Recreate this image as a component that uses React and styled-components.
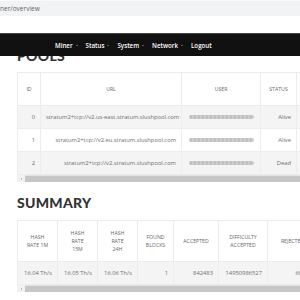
import React from "react";
import styled, { createGlobalStyle } from "styled-components";

const Global = createGlobalStyle`
  html, body { margin: 0; padding: 0; background: #fff; }
  body { width: 300px; height: 300px; overflow: hidden; font-family: "Open Sans", "Liberation Sans", sans-serif; }
  #root { position: relative; width: 300px; }
`;

const UrlBar = styled.div`
  height: 16px;
  background: #f1f3f4;
  border-top: 1px solid #fafafa;
  box-sizing: border-box;
  display: flex;
  align-items: center;
  font-size: 6.5px;
  color: #5f6368;
  white-space: nowrap;
`;

const NavBar = styled.nav`
  position: absolute;
  top: 33px;
  left: 0;
  right: 0;
  height: 23px;
  background: #111;
  border-top: 1px solid #444;
  box-sizing: border-box;
  display: flex;
  align-items: center;
  padding-left: 55px;
  gap: 8px;
  z-index: 2;
`;

const NavItem = styled.span`
  display: flex;
  align-items: center;
  gap: 3px;
  color: #fff;
  font-family: "Open Sans", sans-serif;
  font-weight: 600;
  font-size: 6.2px;
  white-space: nowrap;
`;

const Caret = styled.span`
  width: 0;
  height: 0;
  border-left: 1.5px solid transparent;
  border-right: 1.5px solid transparent;
  border-top: 1.8px solid #aaa;
  margin-top: 1px;
`;

const Content = styled.main`
  padding-left: 17px;
`;

const Heading = styled.h2`
  margin: ${(p) => p.$mt}px 0 ${(p) => p.$mb}px 0;
  font-family: "Lato", "Open Sans", sans-serif;
  font-weight: 900;
  font-size: 14px;
  line-height: 14px;
  letter-spacing: 0.3px;
  color: #333;
`;

const ScrollWrap = styled.div`
  width: 283px;
  overflow: hidden;
`;

const Table = styled.table`
  width: ${(p) => p.$w}px;
  min-width: ${(p) => p.$w}px;
  border-collapse: collapse;
  table-layout: fixed;
  border: 1px solid #e8e8e8;
  font-family: "Open Sans", sans-serif;
`;

const Th = styled.th`
  width: ${(p) => p.$w}px;
  box-sizing: border-box;
  border: 1px solid #ececec;
  padding: 8px 2px;
  font-size: 5.2px;
  line-height: 8px;
  font-weight: 400;
  color: #666;
  text-transform: uppercase;
  text-align: center;
  vertical-align: middle;
  background: #fff;
`;

const Tr = styled.tr`
  background: ${(p) => (p.$striped ? "#f4f4f4" : "#fff")};
`;

const Td = styled.td`
  border: 1px solid #ededed;
  padding: 7px 5px;
  font-size: 5.8px;
  line-height: 8px;
  color: #6d6d6d;
  text-align: right;
  white-space: nowrap;
  overflow: hidden;
`;

const Smudge = styled.div`
  height: 3.5px;
  margin: 0 1px 0 2px;
  border-radius: 2px;
  background: repeating-linear-gradient(90deg, #c8c8c8 0px, #b0b0b0 2px, #d0d0d0 4px);
  filter: blur(0.6px);
  opacity: 0.85;
`;

const ScrollBar = styled.div`
  display: flex;
  height: 7px;
  width: 283px;
`;

const ScrollArrow = styled.div`
  width: 8px;
  background: #f1f1f1;
  display: flex;
  align-items: center;
  justify-content: center;
  &::before {
    content: "";
    border-top: 1.5px solid transparent;
    border-bottom: 1.5px solid transparent;
    border-right: 1.5px solid #888;
  }
`;

const ScrollThumb = styled.div`
  flex: 1;
  background: #c6c6c6;
  border-top: 1px solid #e2e2e2;
  box-sizing: border-box;
`;

const pools = [
  { id: 0, url: "stratum2+tcp://v2.us-east.stratum.slushpool.com", status: "Alive" },
  { id: 1, url: "stratum2+tcp://v2.eu.stratum.slushpool.com", status: "Alive" },
  { id: 2, url: "stratum2+tcp://v2.stratum.slushpool.com", status: "Dead" },
];

const poolCols = [
  { w: 23, label: ["ID"] },
  { w: 141, label: ["URL"] },
  { w: 79, label: ["User"] },
  { w: 36, label: ["Status"] },
  { w: 60, label: ["Priority"] },
];

const summaryCols = [
  { w: 40, label: ["Hash", "Rate 1M"], value: "16.04 Th/s" },
  { w: 40, label: ["Hash", "Rate", "15M"], value: "16.05 Th/s" },
  { w: 40, label: ["Hash", "Rate", "24H"], value: "16.06 Th/s" },
  { w: 36, label: ["Found", "Blocks"], value: "1" },
  { w: 45, label: ["Accepted"], value: "842483" },
  { w: 49, label: ["Difficulty", "Accepted"], value: "14950986527" },
  { w: 50, label: ["Rejected"], value: "60831" },
];

const sum = (cols) => cols.reduce((a, c) => a + c.w, 0);

const Label = ({ lines }) =>
  lines.map((l, i) => (
    <React.Fragment key={i}>
      {i > 0 && <br />}
      {l}
    </React.Fragment>
  ));

export default function App() {
  return (
    <>
      <Global />
      <UrlBar>ner/overview</UrlBar>
      <NavBar>
        <NavItem>Miner<Caret /></NavItem>
        <NavItem>Status<Caret /></NavItem>
        <NavItem>System<Caret /></NavItem>
        <NavItem>Network<Caret /></NavItem>
        <NavItem>Logout</NavItem>
      </NavBar>
      <Content>
        <Heading $mt={33} $mb={9}>POOLS</Heading>
        <ScrollWrap>
          <Table $w={sum(poolCols)}>
            <thead>
              <tr>
                {poolCols.map((c, i) => (
                  <Th key={i} $w={c.w}>
                    <Label lines={c.label} />
                    {i === poolCols.length - 1 && (<><br />&nbsp;</>)}
                  </Th>
                ))}
              </tr>
            </thead>
            <tbody>
              {pools.map((p, i) => (
                <Tr key={p.id} $striped={i % 2 === 0}>
                  <Td>{p.id}</Td>
                  <Td>{p.url}</Td>
                  <Td><Smudge /></Td>
                  <Td>{p.status}</Td>
                  <Td>{p.id}</Td>
                </Tr>
              ))}
            </tbody>
          </Table>
        </ScrollWrap>
        <ScrollBar>
          <ScrollArrow />
          <ScrollThumb />
        </ScrollBar>
        <Heading $mt={14} $mb={10}>SUMMARY</Heading>
        <ScrollWrap>
          <Table $w={sum(summaryCols)}>
            <thead>
              <tr>
                {summaryCols.map((c, i) => (
                  <Th key={i} $w={c.w}><Label lines={c.label} /></Th>
                ))}
              </tr>
            </thead>
            <tbody>
              <Tr $striped>
                {summaryCols.map((c, i) => (
                  <Td key={i}>{c.value}</Td>
                ))}
              </Tr>
            </tbody>
          </Table>
        </ScrollWrap>
        <ScrollBar>
          <ScrollArrow />
          <ScrollThumb />
        </ScrollBar>
      </Content>
    </>
  );
}
